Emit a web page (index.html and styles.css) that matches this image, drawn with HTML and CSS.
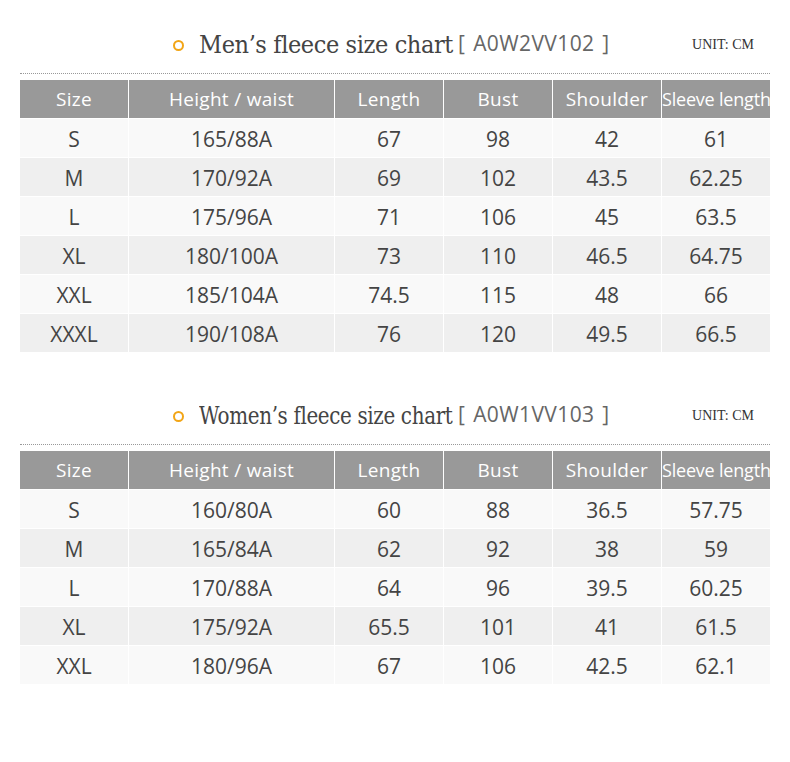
FILE: index.html
```html
<!DOCTYPE html>
<html>
<head>
<meta charset="utf-8">
<link rel="stylesheet" href="styles.css">
</head>
<body>
<div class="page">
  <section class="chart">
    <div class="title-row">
      <span class="dot"></span>
      <span class="title-box"><span class="title">Men’s fleece size chart</span></span>
      <span class="code">[ A0W2VV102 ]</span>
      <span class="unit">UNIT: CM</span>
    </div>
    <div class="rule"></div>
    <div class="grid">
      <div class="h">Size</div><div class="h">Height / waist</div><div class="h">Length</div><div class="h">Bust</div><div class="h">Shoulder</div><div class="h tight">Sleeve length</div>
      <div class="c a">S</div><div class="c a">165/88A</div><div class="c a">67</div><div class="c a">98</div><div class="c a">42</div><div class="c a">61</div>
      <div class="c b">M</div><div class="c b">170/92A</div><div class="c b">69</div><div class="c b">102</div><div class="c b">43.5</div><div class="c b">62.25</div>
      <div class="c a">L</div><div class="c a">175/96A</div><div class="c a">71</div><div class="c a">106</div><div class="c a">45</div><div class="c a">63.5</div>
      <div class="c b">XL</div><div class="c b">180/100A</div><div class="c b">73</div><div class="c b">110</div><div class="c b">46.5</div><div class="c b">64.75</div>
      <div class="c a">XXL</div><div class="c a">185/104A</div><div class="c a">74.5</div><div class="c a">115</div><div class="c a">48</div><div class="c a">66</div>
      <div class="c b">XXXL</div><div class="c b">190/108A</div><div class="c b">76</div><div class="c b">120</div><div class="c b">49.5</div><div class="c b">66.5</div>
    </div>
  </section>
  <section class="chart second">
    <div class="title-row">
      <span class="dot"></span>
      <span class="title-box"><span class="title squeeze">Women’s fleece size chart</span></span>
      <span class="code">[ A0W1VV103 ]</span>
      <span class="unit">UNIT: CM</span>
    </div>
    <div class="rule"></div>
    <div class="grid">
      <div class="h">Size</div><div class="h">Height / waist</div><div class="h">Length</div><div class="h">Bust</div><div class="h">Shoulder</div><div class="h tight">Sleeve length</div>
      <div class="c a">S</div><div class="c a">160/80A</div><div class="c a">60</div><div class="c a">88</div><div class="c a">36.5</div><div class="c a">57.75</div>
      <div class="c b">M</div><div class="c b">165/84A</div><div class="c b">62</div><div class="c b">92</div><div class="c b">38</div><div class="c b">59</div>
      <div class="c a">L</div><div class="c a">170/88A</div><div class="c a">64</div><div class="c a">96</div><div class="c a">39.5</div><div class="c a">60.25</div>
      <div class="c b">XL</div><div class="c b">175/92A</div><div class="c b">65.5</div><div class="c b">101</div><div class="c b">41</div><div class="c b">61.5</div>
      <div class="c a">XXL</div><div class="c a">180/96A</div><div class="c a">67</div><div class="c a">106</div><div class="c a">42.5</div><div class="c a">62.1</div>
    </div>
  </section>
</div>
</body>
</html>
```
FILE: styles.css
```css
* { box-sizing: border-box; }
html, body { margin: 0; padding: 0; background: #fff; }
.page { width: 790px; padding-top: 30px; }
.chart { margin-left: 20px; width: 750px; }
.second { margin-top: 49px; }
.title-row {
  display: flex;
  align-items: baseline;
  height: 36px;
  padding-left: 153px;
}
.dot {
  width: 11px; height: 11px;
  border: 2px solid #f2a516;
  border-radius: 50%;
  margin-right: 15px;
  position: relative;
  top: -2px;
}
.title-box {
  width: 254px;
  white-space: nowrap;
}
.title {
  display: inline-block;
  font-family: "DejaVu Serif", "Liberation Serif", serif;
  font-stretch: condensed;
  font-size: 25px;
  color: #444;
  letter-spacing: -0.4px;
  transform-origin: left center;
}
.squeeze {
  transform: scaleX(0.885);
}
.code {
  font-family: "Open Sans", "Noto Sans", sans-serif;
  font-size: 21px;
  color: #666;
  margin-left: 5px;
  word-spacing: 2px;
  letter-spacing: 0.4px;
  position: relative;
  top: -2px;
}
.unit {
  font-family: "Liberation Serif", serif;
  font-size: 14px;
  color: #333;
  margin-left: auto;
  margin-right: 16px;
  position: relative;
  top: -4px;
}
.rule {
  margin-top: 7px;
  border-top: 1px dotted #999;
  height: 1px;
}
.grid {
  margin-top: 6px;
  display: grid;
  grid-template-columns: 108px 205px 108px 108px 108px 108px;
  grid-auto-rows: 38px;
  gap: 1px;
}
.h {
  background: #999;
  color: #fff;
  font-family: "Open Sans", "Noto Sans", sans-serif;
  font-size: 19px;
  letter-spacing: 0.3px;
  line-height: 38px;
  text-align: center;
  white-space: nowrap;
  overflow: hidden;
}
.tight {
  font-size: 18px;
  letter-spacing: -0.2px;
}
.c {
  font-family: "Open Sans", "Noto Sans", sans-serif;
  font-weight: 400;
  font-size: 21px;
  color: #444;
  line-height: 40px;
  text-align: center;
}
.a { background: #f9f9f9; }
.b { background: #efefef; }
```
